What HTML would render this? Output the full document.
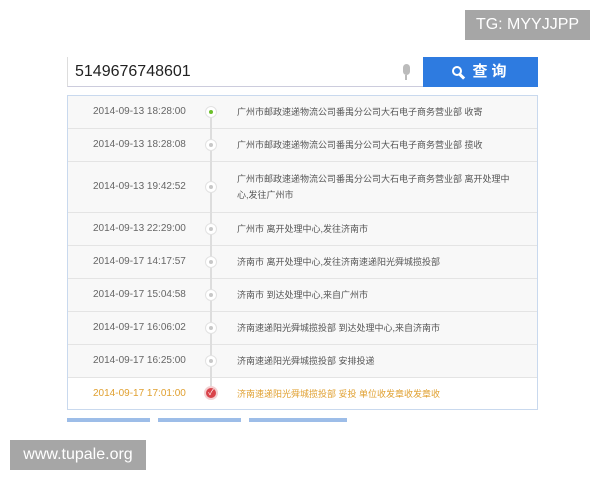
<!DOCTYPE html>
<html><head><meta charset="utf-8"><style>
*{margin:0;padding:0;box-sizing:border-box}
body{width:600px;height:480px;background:#fff;position:relative;overflow:hidden;font-family:"Liberation Sans","Noto Sans CJK SC",sans-serif}
.tg{position:absolute;left:465px;top:10px;width:125px;height:30px;background:#a6a6a6;color:#fff;font-size:16px;line-height:30px;text-align:center}
.wm{position:absolute;left:10px;top:440px;width:136px;height:30px;background:#a6a6a6;color:#fff;font-size:16px;line-height:30px;text-align:center}
.inp{position:absolute;left:67px;top:57px;width:356px;height:30px;border-left:1px solid #ddd;border-bottom:1px solid #ccd;font-size:16px;line-height:30px;padding-left:7px;color:#222}
.mic{position:absolute;left:403px;top:64px;width:7px;height:11px;background:#bbb;border-radius:4px}
.micb{position:absolute;left:405px;top:75px;width:2px;height:5px;background:#bbb}
.btn{position:absolute;left:423px;top:57px;width:115px;height:30px;background:#2e7be0;color:#fff;font-size:15px;line-height:30px;text-align:center;letter-spacing:4px;font-weight:bold}
.mg{position:absolute;left:452px;top:66px;width:10px;height:10px;border:2px solid #fff;border-radius:50%}
.mh{position:absolute;left:459px;top:75px;width:6px;height:3px;background:#fff;transform:rotate(45deg)}
.tbl{position:absolute;left:67px;top:95px;width:471px;height:315px;border:1px solid #c9d9ee}
.row{position:absolute;left:0;width:469px;border-bottom:1px solid #e4e4e4;background:#f8f8f8;font-size:9px;color:#555}
.row .t{position:absolute;left:25px;font-size:10px;color:#666}
.row .x{position:absolute;left:169px;width:284px;line-height:16px}
.line{position:absolute;left:142px;top:16px;width:2px;height:280px;background:#ddd;z-index:1}
.dot{position:absolute;left:137px;width:12px;height:12px;border-radius:50%;background:#fff;border:1px solid #e2e2e2;z-index:2}
.dot i{position:absolute;left:3px;top:3px;width:4px;height:4px;border-radius:50%;background:#c8c8c8}
.bar{position:absolute;top:418px;height:4px;background:#9dbde8}
</style></head><body>
<div class="tg">TG: MYYJJPP</div>
<div class="inp">5149676748601</div>
<div class="mic"></div><div class="micb"></div>
<div class="btn"><span style="padding-left:22px">查询</span></div>
<div class="mg"></div><div class="mh"></div>
<div class="tbl">
<div class="row" style="top:0;height:33px"><span class="t" style="top:10px">2014-09-13 18:28:00</span><div class="dot" style="top:10px"><i style="background:#6cbf2a"></i></div><span class="x" style="top:8px">广州市邮政速递物流公司番禺分公司大石电子商务营业部 收寄</span></div>
<div class="row" style="top:33px;height:33px"><span class="t" style="top:10px">2014-09-13 18:28:08</span><div class="dot" style="top:10px"><i></i></div><span class="x" style="top:8px">广州市邮政速递物流公司番禺分公司大石电子商务营业部 揽收</span></div>
<div class="row" style="top:66px;height:51px"><span class="t" style="top:19px">2014-09-13 19:42:52</span><div class="dot" style="top:19px"><i></i></div><span class="x" style="top:9px">广州市邮政速递物流公司番禺分公司大石电子商务营业部 离开处理中<br>心,发往广州市</span></div>
<div class="row" style="top:117px;height:33px"><span class="t" style="top:10px">2014-09-13 22:29:00</span><div class="dot" style="top:10px"><i></i></div><span class="x" style="top:8px">广州市 离开处理中心,发往济南市</span></div>
<div class="row" style="top:150px;height:33px"><span class="t" style="top:10px">2014-09-17 14:17:57</span><div class="dot" style="top:10px"><i></i></div><span class="x" style="top:8px">济南市 离开处理中心,发往济南速递阳光舜城揽投部</span></div>
<div class="row" style="top:183px;height:33px"><span class="t" style="top:10px">2014-09-17 15:04:58</span><div class="dot" style="top:10px"><i></i></div><span class="x" style="top:8px">济南市 到达处理中心,来自广州市</span></div>
<div class="row" style="top:216px;height:33px"><span class="t" style="top:10px">2014-09-17 16:06:02</span><div class="dot" style="top:10px"><i></i></div><span class="x" style="top:8px">济南速递阳光舜城揽投部 到达处理中心,来自济南市</span></div>
<div class="row" style="top:249px;height:33px"><span class="t" style="top:10px">2014-09-17 16:25:00</span><div class="dot" style="top:10px"><i></i></div><span class="x" style="top:8px">济南速递阳光舜城揽投部 安排投递</span></div>
<div class="row" style="top:282px;height:31px;background:#fff;border:none;color:#e0a030"><span class="t" style="top:10px;color:#e0a030">2014-09-17 17:01:00</span><div class="dot" style="top:8px;width:14px;height:14px;left:136px;background:#d9434a;border:2px solid #f3d0d2;color:#fff;font-size:8px;line-height:10px;text-align:center">✓</div><span class="x" style="top:8px">济南速递阳光舜城揽投部 妥投 单位收发章收发章收</span></div>
<div class="line"></div>
</div>
<div class="bar" style="left:67px;width:83px"></div>
<div class="bar" style="left:158px;width:83px"></div>
<div class="bar" style="left:249px;width:98px"></div>
<div class="wm">www.tupale.org</div>
</body></html>
